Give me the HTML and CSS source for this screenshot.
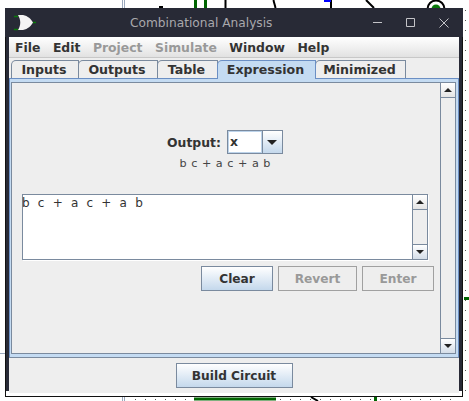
FILE: index.html
```html
<!DOCTYPE html>
<html lang="en">
<head>
  <meta charset="UTF-8">
  <meta name="viewport" content="width=device-width, initial-scale=1.0">
  <title>Combinational Analysis</title>
  <link rel="stylesheet" href="styles.css">
</head>
<body>
  <!-- circuit canvas behind the dialog -->
  <svg class="canvas" width="469" height="401" viewBox="0 0 469 401">
    <path class="edge" d="M0 353.500H5M122.500 0V8M124.500 0V8M122.500 397V401M124.500 397V401" />
    <path class="wire" d="M195.500 0V8M205.500 0V8M194 399H276M375.500 397V401M464 298.500H469" />
    <path class="blk" d="M159 7H163M225.500 0V8M273.500 0C274 3 275 5 275.500 8M331 0V8M366 0L374 8M311 397L318 401" />
    <path class="blu" d="M324 1H331" />
    <circle class="node" cx="436" cy="9" r="8.500" />
    <circle class="dot" cx="436" cy="9" r="4.500" />
    <path class="ticks" d="M465.500 10V397" />
    <path class="ticks" d="M135 399.500H190M280 399.500H460" />
  </svg>

  <div class="window">
    <div class="titlebar">
      <svg class="logo" width="24" height="24" viewBox="0 0 24 24">
        <path class="logo-pin" d="M1 5.500H5M1 18.500H5M20 11.500H23" />
        <path class="logo-gate" d="M5 4H10C15 5 18 8 20 11.500C18 15 15 18 10 19H5C8 14 8 9 5 4Z" />
      </svg>
      <span class="title">Combinational Analysis</span>
      <div class="controls">
        <svg width="10" height="10" viewBox="0 0 10 10"><path d="M0 4.500H9" /></svg>
        <svg width="10" height="10" viewBox="0 0 10 10"><path d="M0.500 0.500H8.500V8.500H0.500Z" /></svg>
        <svg width="10" height="10" viewBox="0 0 10 10"><path d="M0.500 0.500L9.500 9.500M9.500 0.500L0.500 9.500" /></svg>
      </div>
    </div>

    <div class="menubar">
      <span>File</span>
      <span>Edit</span>
      <span class="off">Project</span>
      <span class="off">Simulate</span>
      <span>Window</span>
      <span>Help</span>
    </div>

    <div class="tabs">
      <div class="tab tab-inputs">Inputs</div>
      <div class="tab tab-outputs">Outputs</div>
      <div class="tab tab-table">Table</div>
      <div class="tab tab-expr active">Expression</div>
      <div class="tab tab-min">Minimized</div>
    </div>

    <div class="pane">
      <div class="pane-inner">
        <div class="content">
          <div class="output-row">
            <label class="output-label">Output:</label>
            <div class="combo">
              <div class="combo-value">x</div>
              <div class="combo-btn"><i class="arrow-down"></i></div>
            </div>
          </div>
          <div class="expr-preview">b c + a c + a b</div>

          <div class="editor">
            <div class="editor-text">b c + a c + a b</div>
            <div class="scrollbar">
              <div class="sb-btn"><i class="arrow-up"></i></div>
              <div class="sb-track"></div>
              <div class="sb-btn down"><i class="arrow-down"></i></div>
            </div>
          </div>

          <div class="editor-buttons">
            <button class="btn">Clear</button>
            <button class="btn off revert">Revert</button>
            <button class="btn off">Enter</button>
          </div>
        </div>
        <div class="scrollbar">
          <div class="sb-btn"><i class="arrow-up"></i></div>
          <div class="sb-track"></div>
          <div class="sb-btn down"><i class="arrow-down"></i></div>
        </div>
      </div>
    </div>

    <div class="footer">
      <button class="btn build">Build Circuit</button>
    </div>
  </div>
</body>
</html>
```

FILE: styles.css
```css
html, body { margin: 0; padding: 0; }
body { width: 469px; height: 401px; background: #fff; overflow: hidden; position: relative; font-family: "DejaVu Sans", sans-serif; }

/* canvas */
.canvas { position: absolute; left: 0; top: 0; }
.canvas path { fill: none; }
.canvas .edge { stroke: #9aa8bd; stroke-width: 1; }
.canvas .wire { stroke: #006400; stroke-width: 3; }
.canvas .blk { stroke: #000; stroke-width: 2; }
.canvas .blu { stroke: #0000ff; stroke-width: 2; }
.canvas .node { fill: none; stroke: #000; stroke-width: 2; }
.canvas .dot { fill: #0a7a0a; }
.canvas .ticks { stroke: #555; stroke-width: 1; stroke-dasharray: 1 9; }

/* window: dark sides stop short of the white strip along the bottom */
.window { position: absolute; left: 5px; top: 8px; width: 458px; height: 389px; box-sizing: border-box; padding: 0 4px 4px 4px; display: flex; flex-direction: column; background: linear-gradient(#282a36, #282a36) left top / 4px 383px no-repeat, linear-gradient(#282a36, #282a36) right top / 4px 383px no-repeat, linear-gradient(#eee, #eee) 4px 0 / 450px 385px no-repeat, #fff; box-shadow: inset 1px 0 0 #111, inset -1px 0 0 #111, inset 0 -1px 0 #111; }

.titlebar { height: 29px; margin: 0 -4px; background: #282a36; display: flex; align-items: center; position: relative; flex: none; }
.logo { margin-left: 8px; }
.logo-pin { stroke: #0a7a0a; stroke-width: 1.5; fill: none; }
.logo-gate { fill: #f4f4f4; }
.title { position: absolute; left: 125px; top: 7px; color: #a8a8ac; font-size: 12.2px; line-height: 16px; }
.controls { margin-left: auto; margin-right: 14px; margin-top: 1px; display: flex; gap: 23px; }
.controls svg { display: block; }
.controls path { fill: none; stroke: #c4c4c8; stroke-width: 1; }

.menubar { height: 20px; flex: none; display: flex; align-items: center; padding-left: 6px; gap: 12.500px; background: linear-gradient(#fff, #e2e2e2); border-bottom: 1px solid #c8c8c8; font-size: 12.4px; font-weight: bold; color: #333; }
.menubar .off { color: #999; }

.tabs { height: 20px; flex: none; display: flex; align-items: flex-end; padding-left: 2px; box-sizing: border-box; font-size: 12.6px; font-weight: bold; color: #333; }
.tab { box-sizing: border-box; height: 18px; border: 1px solid #7a8a9e; border-bottom: none; border-top-left-radius: 5px; display: flex; align-items: center; justify-content: center; background: #eee; margin-right: -1px; padding-right: 2px; }
.tab-inputs { width: 68px; }
.tab-outputs { width: 80px; }
.tab-table { width: 61px; }
.tab-expr { width: 99px; }
.tab-min { width: 91px; }
.tab.active { position: relative; background: #c4dbf2; border-color: #6b8fc4; height: 19px; margin-bottom: -1px; padding-bottom: 1px; }

.pane { flex: 1; min-height: 0; box-sizing: border-box; background: #c4dbf2; border: 1px solid #6b8fc4; border-bottom-color: #7a8a9e; padding: 3px 2px 3px 1px; }
.pane-inner { height: 100%; box-sizing: border-box; border: 1px solid #7a8a9e; background: #eee; display: flex; }

.content { flex: 1; min-width: 0; display: flex; flex-direction: column; padding: 47px 12px 0 10px; }
.output-row { display: flex; align-items: center; justify-content: center; gap: 6px; height: 24px; font-size: 12.4px; font-weight: bold; color: #333; }
.combo { width: 56px; height: 24px; box-sizing: border-box; border: 1px solid #7a8a9e; display: flex; }
.combo-value { flex: 1; background: #fff; border: 1px solid #bcd3ea; padding-left: 1px; line-height: 20px; }
.combo-btn { width: 19px; border-left: 1px solid #7a8a9e; background: linear-gradient(#fff, #c4d8ec); display: flex; align-items: center; justify-content: center; }
.expr-preview { text-align: center; font-size: 11.2px; line-height: 16px; margin-top: 2px; word-spacing: 1px; color: #444; }

.editor { margin-top: 22px; height: 66px; flex: none; box-sizing: border-box; border: 1px solid #7a8a9e; background: #fff; box-shadow: 1px 1px 0 #fff; display: flex; }
.editor-text { flex: 1; font-size: 12px; line-height: 16px; text-indent: -1px; color: #333; word-spacing: 3.800px; letter-spacing: 0.300px; }
.editor-buttons { display: flex; justify-content: flex-end; gap: 5px; margin-top: 6px; margin-right: -6px; }

.btn { height: 25px; box-sizing: border-box; border: 1px solid #7a8a9e; background: linear-gradient(#fff, #c4d8ec); font: bold 12.2px "DejaVu Sans", sans-serif; color: #333; padding: 0; width: 72px; }
.btn.off { background: #eee; border-color: #a0a0a0; color: #999; }
.btn.revert { width: 79px; }

.scrollbar { width: 15px; flex: none; display: flex; flex-direction: column; border-left: 1px solid #7a8a9e; background: #eee; box-sizing: border-box; }
.sb-btn { height: 15px; flex: none; display: flex; align-items: center; justify-content: center; background: linear-gradient(#fff, #e4e4e4); border-bottom: 1px solid #7a8a9e; box-sizing: border-box; }
.sb-btn.down { border-bottom: none; border-top: 1px solid #7a8a9e; background: linear-gradient(#fff, #d4dde8); }
.sb-track { flex: 1; }

.arrow-up, .arrow-down { display: block; width: 0; height: 0; border-left: 4px solid transparent; border-right: 4px solid transparent; }
.arrow-up { border-bottom: 4px solid #222; }
.arrow-down { border-top: 4px solid #222; }
.combo-btn .arrow-down { border-left-width: 5px; border-right-width: 5px; border-top-width: 5px; }

.footer { height: 35px; flex: none; display: flex; align-items: flex-start; justify-content: center; padding-top: 5px; box-sizing: border-box; }
.btn.build { width: 117px; }
```
